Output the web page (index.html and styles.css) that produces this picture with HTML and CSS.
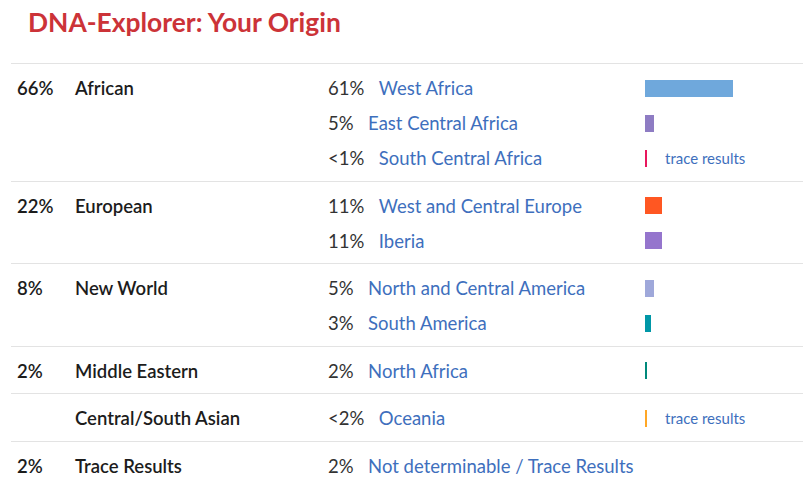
FILE: index.html
```html
<!DOCTYPE html>
<html>
<head>
<meta charset="utf-8">
<link rel="stylesheet" href="styles.css">
</head>
<body>
<h1 class="title">DNA-Explorer: Your Origin</h1>
<div class="table">
  <div class="group">
    <div class="main"><span class="pct">66%</span><span class="label">African</span></div>
    <div class="subs">
      <div class="sub"><div class="name"><span class="spct">61%</span><a class="link">West Africa</a></div><div class="barcell"><span class="bar" style="width:88px;background:#6fa8dc"></span></div></div>
      <div class="sub"><div class="name"><span class="spct">5%</span><a class="link">East Central Africa</a></div><div class="barcell"><span class="bar" style="width:9px;background:#8e7cc3"></span></div></div>
      <div class="sub"><div class="name"><span class="spct">&lt;1%</span><a class="link">South Central Africa</a></div><div class="barcell"><span class="bar" style="width:2px;background:#e8175d"></span><span class="trace">trace results</span></div></div>
    </div>
  </div>
  <div class="group">
    <div class="main"><span class="pct">22%</span><span class="label">European</span></div>
    <div class="subs">
      <div class="sub"><div class="name"><span class="spct">11%</span><a class="link">West and Central Europe</a></div><div class="barcell"><span class="bar" style="width:17px;background:#ff5722"></span></div></div>
      <div class="sub"><div class="name"><span class="spct">11%</span><a class="link">Iberia</a></div><div class="barcell"><span class="bar" style="width:17px;background:#9575cd"></span></div></div>
    </div>
  </div>
  <div class="group">
    <div class="main"><span class="pct">8%</span><span class="label">New World</span></div>
    <div class="subs">
      <div class="sub"><div class="name"><span class="spct">5%</span><a class="link">North and Central America</a></div><div class="barcell"><span class="bar" style="width:9px;background:#9fa8da"></span></div></div>
      <div class="sub"><div class="name"><span class="spct">3%</span><a class="link">South America</a></div><div class="barcell"><span class="bar" style="width:6px;background:#0097a7"></span></div></div>
    </div>
  </div>
  <div class="group">
    <div class="main"><span class="pct">2%</span><span class="label">Middle Eastern</span></div>
    <div class="subs">
      <div class="sub"><div class="name"><span class="spct">2%</span><a class="link">North Africa</a></div><div class="barcell"><span class="bar" style="width:2px;background:#00897b"></span></div></div>
    </div>
  </div>
  <div class="group">
    <div class="main"><span class="pct"></span><span class="label">Central/South Asian</span></div>
    <div class="subs">
      <div class="sub"><div class="name"><span class="spct">&lt;2%</span><a class="link">Oceania</a></div><div class="barcell"><span class="bar" style="width:2px;background:#ffa726"></span><span class="trace">trace results</span></div></div>
    </div>
  </div>
  <div class="group">
    <div class="main"><span class="pct">2%</span><span class="label">Trace Results</span></div>
    <div class="subs">
      <div class="sub"><div class="name"><span class="spct">2%</span><a class="link">Not determinable / Trace Results</a></div><div class="barcell"></div></div>
    </div>
  </div>
</div>
</body>
</html>
```
FILE: styles.css
```css
html, body {
  margin: 0;
  padding: 0;
  background: #ffffff;
}
body {
  font-family: Lato, "Open Sans", sans-serif;
  color: #222222;
}
.title {
  margin: 0;
  padding: 7px 0 0 28px;
  height: 63px;
  box-sizing: border-box;
  font-size: 26.4px;
  font-weight: 700;
  color: #cc3338;
  line-height: 30px;
}
.table {
  margin-left: 11px;
}
.group {
  display: flex;
  border-top: 1px solid #e3e3e3;
  padding: 6.5px 0 5px 6px;
}
.main {
  width: 311px;
  height: 35px;
  display: flex;
  align-items: center;
  font-size: 18.5px;
  font-weight: 600;
  color: #1c1c1c;
}
.pct {
  width: 58px;
}
.subs {
  display: flex;
  flex-direction: column;
  flex: 1;
}
.sub {
  display: flex;
  align-items: center;
  height: 35px;
  font-size: 18.5px;
}
.name {
  width: 317px;
  display: flex;
  align-items: center;
}
.spct {
  color: #333333;
  margin-right: 14.5px;
}
.link {
  color: #3e6fbd;
}
.barcell {
  display: flex;
  align-items: center;
}
.bar {
  display: inline-block;
  height: 17px;
}
.trace {
  margin-left: 18px;
  font-size: 15px;
  color: #3e6fbd;
}
```
